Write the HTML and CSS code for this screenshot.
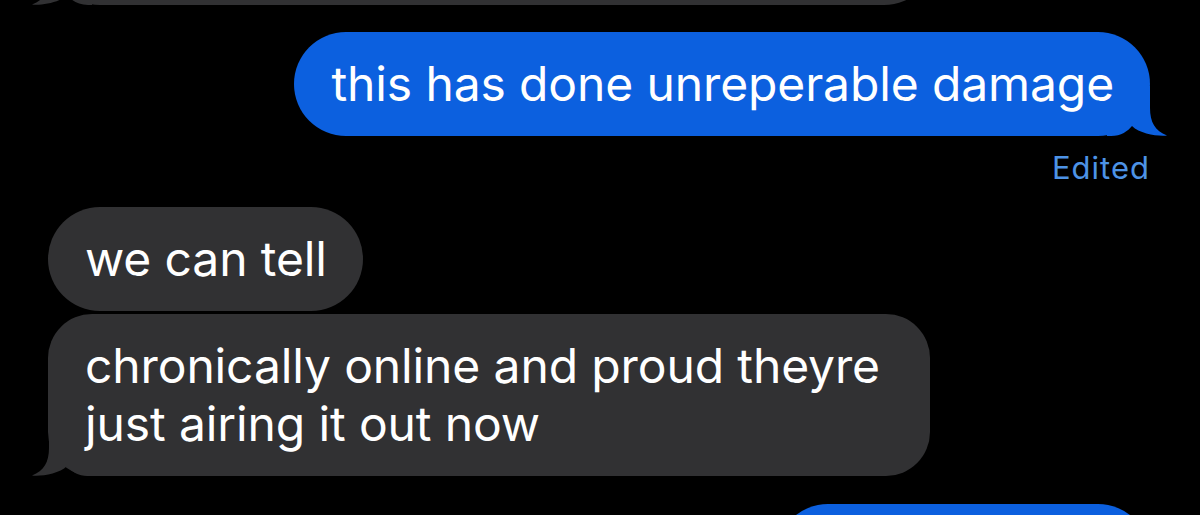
FILE: index.html
```html
<!DOCTYPE html>
<html lang="en">
<head>
<meta charset="utf-8">
<title>Messages</title>
<link rel="stylesheet" href="styles.css">
</head>
<body>
<main class="thread">
  <div class="bubble in cut-top">&nbsp;<svg class="tail" viewBox="0 0 60 50"><path d="M0 0 L43 0 L43 22 C43 36 48 45 60 49.5 C51 50.5 33 48 25 40 C21 45 14 50 4 50 L0 50 Z"/></svg></div>
  <div class="bubble out">this has done unreperable damage<svg class="tail" viewBox="0 0 60 50"><path d="M0 0 L43 0 L43 22 C43 36 48 45 60 49.5 C51 50.5 33 48 25 40 C21 45 14 50 4 50 L0 50 Z"/></svg></div>
  <div class="status">Edited</div>
  <div class="bubble in first">we can tell</div>
  <div class="bubble in multi">chronically online and proud theyre<br>just airing it out now<svg class="tail" viewBox="0 0 60 50"><path d="M0 0 L43 0 L43 22 C43 36 48 45 60 49.5 C51 50.5 33 48 25 40 C21 45 14 50 4 50 L0 50 Z"/></svg></div>
  <div class="bubble out cut-bottom">&nbsp;</div>
</main>
</body>
</html>
```
FILE: styles.css
```css
html, body {
  margin: 0;
  background: #000;
  height: 515px;
  overflow: hidden;
}
body {
  font-family: Inter, "Noto Sans", sans-serif;
}
.thread {
  display: flex;
  flex-direction: column;
  padding: 0 50px 0 48px;
}
.bubble {
  position: relative;
  isolation: isolate;
  font-size: 48px;
  line-height: 58px;
  letter-spacing: -0.12px;
  padding: 23px 36px 23px 37px;
  border-radius: 52px;
  color: #fff;
}
.in {
  align-self: flex-start;
  background: #313133;
}
.out {
  align-self: flex-end;
  background: #0c60df;
}
.tail {
  position: absolute;
  z-index: -1;
  bottom: 0;
  width: 60px;
  height: 50px;
}
.out .tail {
  right: -17px;
  fill: #0c60df;
}
.in .tail {
  left: -16px;
  transform: scaleX(-1);
  fill: #313133;
}
.cut-top {
  width: 815px;
  margin-top: -99px;
}
.out:not(.cut-bottom) {
  margin-top: 27px;
}
.status {
  align-self: flex-end;
  color: #4d93e6;
  font-size: 31px;
  line-height: 34px;
  letter-spacing: 1px;
  margin-top: 15px;
}
.first {
  margin-top: 22px;
}
.multi {
  margin-top: 3px;
  border-radius: 44px;
  padding-right: 50px;
}
.cut-bottom {
  margin-top: 28px;
  width: 301px;
}
```
